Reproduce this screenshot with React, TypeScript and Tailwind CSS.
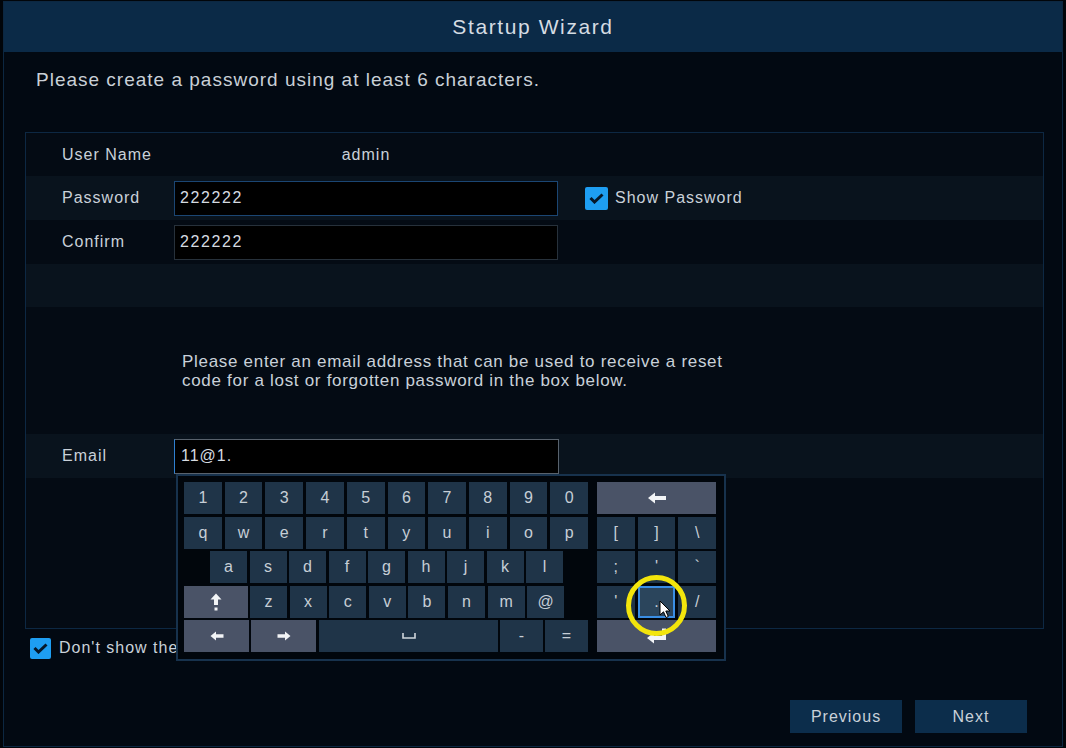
import React from 'react';

type KeyProps = {
  label?: React.ReactNode;
  className?: string;
  gray?: boolean;
  active?: boolean;
};

function Key({ label, className = '', gray, active }: KeyProps) {
  const tone = active
    ? 'bg-[#2b455c] border-2 border-[#3a8ee4]'
    : gray
    ? 'bg-[#4a5367]'
    : 'bg-[#1f3448]';
  return (
    <div className={`h-[32px] flex items-center justify-center text-[16px] tracking-normal text-[#c6ced6] ${tone} ${className}`}>
      {label}
    </div>
  );
}

const ArrowLeft = () => (
  <svg width="20" height="12" viewBox="0 0 20 12">
    <path d="M1 6 L8 0.5 V4 H19 V8 H8 V11.5 Z" fill="#f2f4f6" />
  </svg>
);

const ArrowSmallLeft = () => (
  <svg width="14" height="10" viewBox="0 0 14 10">
    <path d="M0.5 5 L6 0.5 V3.3 H13.5 V6.7 H6 V9.5 Z" fill="#f2f4f6" />
  </svg>
);

const ArrowSmallRight = () => (
  <svg width="14" height="10" viewBox="0 0 14 10">
    <path d="M13.5 5 L8 0.5 V3.3 H0.5 V6.7 H8 V9.5 Z" fill="#f2f4f6" />
  </svg>
);

const ShiftIcon = () => (
  <svg width="12" height="18" viewBox="0 0 12 18">
    <path d="M6 0.5 L11.5 6.5 H8 V12 H4 V6.5 H0.5 Z" fill="#f2f4f6" />
    <rect x="4.5" y="14.5" width="3" height="3" fill="#f2f4f6" />
  </svg>
);

const SpaceIcon = () => (
  <svg width="14" height="6" viewBox="0 0 14 6">
    <path d="M1 0 V5 H13 V0" fill="none" stroke="#d0d6dc" strokeWidth="1.6" />
  </svg>
);

const EnterIcon = () => (
  <svg width="22" height="16" viewBox="0 0 22 16">
    <path d="M16 0.5 H20 V12 H8 V15.5 L1 10 L8 4.5 V8 H16 Z" fill="#f2f4f6" />
  </svg>
);

const Check = () => (
  <svg width="15" height="11" viewBox="0 0 15 11">
    <path d="M1.5 5 L5.5 9 L13.5 1.5" fill="none" stroke="#06182a" strokeWidth="3" />
  </svg>
);

function Keyboard() {
  const digits = ['1', '2', '3', '4', '5', '6', '7', '8', '9', '0'];
  const top = ['q', 'w', 'e', 'r', 't', 'y', 'u', 'i', 'o', 'p'];
  const mid = ['a', 's', 'd', 'f', 'g', 'h', 'j', 'k', 'l'];
  const low = ['z', 'x', 'c', 'v', 'b', 'n', 'm', '@'];

  return (
    <div className="absolute left-[176px] top-[474px] w-[550px] h-[187px] border-2 border-[#17324d] bg-[#01060c] pl-[6px] pt-[6px] flex gap-[9px]">
      <div className="w-[404px] flex flex-col gap-[2.5px]">
        <div className="grid grid-cols-10 gap-[3px]">
          {digits.map(d => <Key key={d} label={d} />)}
        </div>
        <div className="grid grid-cols-10 gap-[3px]">
          {top.map(d => <Key key={d} label={d} />)}
        </div>
        <div className="flex gap-[2.5px] pl-[26px]">
          {mid.map(d => <Key key={d} label={d} className="w-[37px]" />)}
        </div>
        <div className="flex gap-[2.6px]">
          <Key gray label={<ShiftIcon />} className="w-[64px] mr-[-0.6px]" />
          {low.map(d => <Key key={d} label={d} className="w-[37px]" />)}
        </div>
        <div className="flex">
          <Key gray label={<ArrowSmallLeft />} className="w-[65px]" />
          <Key gray label={<ArrowSmallRight />} className="w-[65px] ml-[2px]" />
          <Key label={<SpaceIcon />} className="w-[179px] ml-[3px]" />
          <Key label="-" className="w-[43px] ml-[2px]" />
          <Key label="=" className="w-[43px] ml-[2px]" />
        </div>
      </div>
      <div className="w-[119px] grid grid-cols-3 gap-x-[3px] gap-y-[2.5px] content-start">
        <Key gray label={<ArrowLeft />} className="col-span-3" />
        <Key label="[" />
        <Key label="]" />
        <Key label="\" />
        <Key label=";" className="text-[13px]" />
        <Key label="'" className="text-[13px]" />
        <Key label="`" className="text-[13px]" />
        <Key label="'" className="text-[12px]" />
        <Key active label="." className="text-[12px]" />
        <Key label="/" />
        <Key gray label={<EnterIcon />} className="col-span-3" />
      </div>
    </div>
  );
}

export default function App() {
  return (
    <div className="relative w-[1066px] h-[748px] bg-[#01050a] overflow-hidden font-['Liberation_Sans',Arial,sans-serif] text-[#c9d1d9] tracking-[1px]">
      <div className="ml-[3px] mt-[1px] w-[1060px] h-[746px] border border-[#0c2741] bg-[#020912] flex flex-col">
        <div className="h-[50px] bg-[#0b2a47] flex items-center justify-center text-[21px] tracking-[1.6px] text-[#d5dce3]">
          Startup Wizard
        </div>

        <div className="h-[80px] pl-[32px] pt-[17px] text-[19px] leading-[22px] tracking-[1px] text-[#c9d0d7]">
          Please create a password using at least 6 characters.
        </div>

        <div className="ml-[21px] w-[1019px] h-[497px] border border-[#0d2843] flex flex-col text-[16px]">
          <div className="h-[43px] flex items-center bg-[#040b14] pl-[36px]">
            <div className="w-[112px]">User Name</div>
            <div className="w-[384px] text-center">admin</div>
          </div>

          <div className="h-[44px] flex items-center bg-[#09131d] pl-[36px]">
            <div className="w-[112px]">Password</div>
            <div className="w-[384px] h-[35px] bg-black border border-[#1b4673] flex items-center pl-[5px] text-[#d6dbe0] tracking-[1.6px]">
              222222
            </div>
            <div className="ml-[27px] w-[23px] h-[23px] bg-[#1e9ef2] rounded-[2px] flex items-center justify-center">
              <Check />
            </div>
            <div className="ml-[7px]">Show Password</div>
          </div>

          <div className="h-[44px] flex items-center bg-[#040b14] pl-[36px]">
            <div className="w-[112px]">Confirm</div>
            <div className="w-[384px] h-[35px] bg-black border border-[#27313b] flex items-center pl-[5px] text-[#d6dbe0] tracking-[1.6px]">
              222222
            </div>
          </div>

          <div className="h-[43px] bg-[#09131d]" />

          <div className="h-[127px] bg-[#040b14] pl-[156px] flex flex-col justify-center text-[17px] leading-[19px] tracking-[0.7px]">
            <div>Please enter an email address that can be used to receive a reset</div>
            <div>code for a lost or forgotten password in the box below.</div>
          </div>

          <div className="h-[44px] flex items-center bg-[#09131d] pl-[36px]">
            <div className="w-[112px]">Email</div>
            <div className="w-[385px] h-[35px] bg-black border border-[#58626d] border-l-[#2e7fd0] flex items-center pl-[6px] text-[#d6dbe0]">
              11@1.
            </div>
          </div>

          <div className="flex-1 bg-[#040b14]" />
        </div>

        <div className="mt-[7px] ml-[26px] flex items-center text-[16px]">
          <div className="w-[21px] h-[21px] bg-[#1e9ef2] rounded-[2px] flex items-center justify-center">
            <Check />
          </div>
          <div className="ml-[8px]">Don't show the wizard again</div>
        </div>

        <div className="mt-[40px] flex justify-end gap-[13px] pr-[35px] text-[16px]">
          <div className="w-[112px] h-[33px] bg-[#0c2d4b] flex items-center justify-center text-[#c9d1d9]">Previous</div>
          <div className="w-[112px] h-[33px] bg-[#0c2d4b] flex items-center justify-center text-[#c9d1d9]">Next</div>
        </div>
      </div>

      <Keyboard />

      <div className="absolute left-[626px] top-[575px] w-[61px] h-[61px] rounded-full border-[5px] border-[#f3e50c]" />

      <svg className="absolute left-[659px] top-[600px]" width="13" height="19" viewBox="0 0 13 19">
        <path d="M1 1 V15 L4.5 11.8 L7 17.5 L9.3 16.5 L6.8 11 H11 Z" fill="#ffffff" stroke="#000000" strokeWidth="1" />
      </svg>
    </div>
  );
}
